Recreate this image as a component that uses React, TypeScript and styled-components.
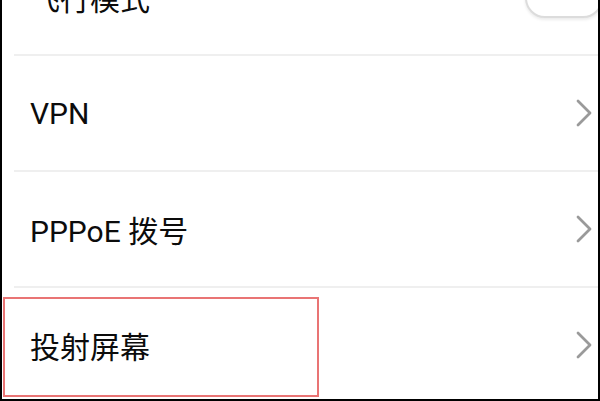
import styled, { createGlobalStyle } from "styled-components"

type Item = {
  name: string
  toggle?: boolean
}

const items: Item[] = [
  { name: "飞行模式", toggle: true },
  { name: "VPN" },
  { name: "PPPoE 拨号" },
  { name: "投射屏幕" },
]

const GlobalStyle = createGlobalStyle`
  html, body {
    margin: 0;
    padding: 0;
    background: #ffffff;
  }
`

const Chevron = () => (
  <svg width="18" height="30" viewBox="0 0 18 30">
    <polyline
      points="3,3 15,15 3,27"
      fill="none"
      stroke="#9a9a9a"
      strokeWidth="2.8"
      strokeLinecap="round"
      strokeLinejoin="round"
    />
  </svg>
)

const SettingRow = ({ item }: { item: Item }) => (
  <Row>
    <Label>{item.name}</Label>
    {item.toggle ? <Switch /> : <Chevron />}
  </Row>
)

export default function App() {
  return (
    <>
      <GlobalStyle />
      <Frame>
        <List>
          {items.map((item, i) => (
            <div key={item.name}>
              {i > 0 && <Divider />}
              <SettingRow item={item} />
            </div>
          ))}
        </List>
        <Highlight />
      </Frame>
    </>
  )
}

const Frame = styled.div`
  position: relative;
  width: 600px;
  height: 401px;
  box-sizing: border-box;
  border-left: 2px solid #000;
  border-right: 2px solid #000;
  border-bottom: 2px solid #000;
  overflow: hidden;
  background: #fff;
`

const List = styled.div`
  display: flex;
  flex-direction: column;
  margin-top: -60px;
`

const Row = styled.div`
  display: flex;
  align-items: center;
  justify-content: space-between;
  height: 114px;
  padding: 0 5px 0 28px;
`

const Label = styled.div`
  font-family: "Roboto", "Noto Sans CJK SC", sans-serif;
  font-size: 30px;
  font-weight: 400;
  color: #0c0c0c;
`

const Switch = styled.div`
  width: 74px;
  height: 38px;
  margin-right: -10px;
  border: 2px solid #dcdcdc;
  border-radius: 20px;
  box-shadow: 0 2px 3px rgba(0, 0, 0, 0.08);
  background: #fff;
`

const Divider = styled.div`
  height: 2px;
  margin-left: 12px;
  background: #efefef;
`

const Highlight = styled.div`
  position: absolute;
  left: 1px;
  top: 297px;
  width: 316px;
  height: 100px;
  box-sizing: border-box;
  border: 2px solid #e97474;
  pointer-events: none;
`
